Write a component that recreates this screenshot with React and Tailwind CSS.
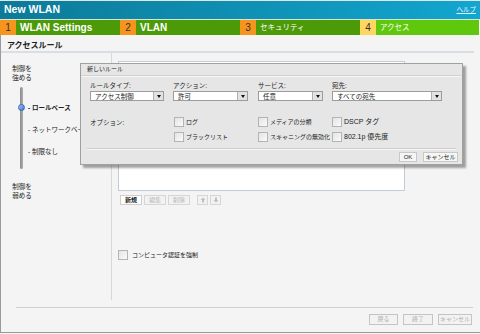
import React from "react";

const jp = { fontFamily: '"Liberation Sans", "Noto Sans CJK JP", sans-serif' };

const steps = [
  { n: "1", label: "WLAN Settings", bold: true, num: "bg-[#f7941d]", bar: "bg-[#4c9a08]", w: "w-[104px]" },
  { n: "2", label: "VLAN", bold: true, num: "bg-[#f7941d]", bar: "bg-[#4c9a08]", w: "w-[104px]" },
  { n: "3", label: "セキュリティ", bold: false, num: "bg-[#f7941d]", bar: "bg-[#4c9a08]", w: "w-[104px]" },
  { n: "4", label: "アクセス", bold: false, num: "bg-[#ffd760]", bar: "bg-[#60c80c]", w: "w-[103px]" },
];

function Check() {
  return <span className="inline-block h-[10px] w-[10px] shrink-0 border border-[#b4b4b4] bg-gradient-to-br from-[#e4e4e4] to-[#fafafa]" />;
}

function Select({ value, w }) {
  return (
    <div className={`flex h-[10px] ${w} border border-[#9c9c9c] bg-white`}>
      <span className="flex-1 pl-[4px] text-[6.5px] leading-[9px] text-[#222]">{value}</span>
      <span className="flex w-[10px] items-center justify-center border-l border-[#b0b0b0] bg-[#e2e2e2]">
        <span className="h-0 w-0 border-l-[2.5px] border-r-[2.5px] border-t-[3px] border-l-transparent border-r-transparent border-t-[#111]" />
      </span>
    </div>
  );
}

function Opt({ label, latin }) {
  return (
    <div className="flex items-center gap-[2px] whitespace-nowrap">
      <Check />
      <span className={latin ? "text-[7px] leading-[10px] text-[#222]" : "text-[6px] leading-[10px] text-[#222]"}>{label}</span>
    </div>
  );
}

function SmallBtn({ children, w, on }) {
  return (
    <span
      className={`flex h-[10px] ${w} items-center justify-center border text-[6px] leading-[8px] ${
        on ? "border-[#cfcfcf] bg-white font-bold text-[#222]" : "border-[#d6d6d6] bg-[#f2f2f2] text-[#b8b8b8]"
      }`}
    >
      {children}
    </span>
  );
}

export default function App() {
  return (
    <div className="relative h-[334px] w-[480px] overflow-hidden bg-[#f4f4f4] text-[#222]" style={jp}>
      <div className="h-px bg-[#e2e6e8]" />
      <header className="flex h-[18px] items-center justify-between bg-gradient-to-r from-[#0c7a98] to-[#12a6d0] pl-[4px] pr-[4px]">
        <span className="text-[10.5px] font-bold text-white">New WLAN</span>
        <span className="text-[6.5px] text-[#e6f6ff] underline">ヘルプ</span>
      </header>
      <div className="h-px bg-[#d8e8d0]" />
      <nav className="flex h-[15px]">
        {steps.map((s) => (
          <div key={s.n} className="flex">
            <span className={`flex w-[16px] items-center justify-center text-[10px] text-[#333] ${s.num}`}>{s.n}</span>
            <span
              className={`flex items-center pl-[4px] text-white ${s.w} ${s.bar} ${
                s.bold ? "text-[10px] font-bold" : "text-[7.5px]"
              }`}
            >
              {s.label}
            </span>
          </div>
        ))}
      </nav>

      <div className="flex h-[298px] flex-col border-b border-l border-[#9a9a9a]">
        <div className="h-[16px] pl-[6px] pt-[6px] text-[8px] font-bold leading-[10px]">アクセスルール</div>
        <div className="mr-[6px] h-[2px] bg-[#d8dee4]" />

        <div className="flex h-[247px]">
          <aside className="w-[111px] border-r border-[#d8d8d8] pt-[11px]">
            <div className="ml-[9px] w-[24px] text-center text-[6.5px] leading-[9px]">
              制御を<br />強める
            </div>
            <div className="mt-[5px] flex">
              <div className="relative ml-[19px] h-[82px] w-[3px] rounded-sm bg-gradient-to-r from-[#8a8a8a] to-[#b0b0b0]">
                <span className="absolute left-[-2px] top-[17px] h-[7px] w-[7px] rounded-full border border-[#3a64b8] bg-gradient-to-br from-[#a8c8ff] to-[#3f70d0]" />
              </div>
              <div className="ml-[5px] flex flex-col gap-[13px] whitespace-nowrap pt-[16px] text-[6.5px] leading-[9px]">
                <span className="font-bold">- ロールベース</span>
                <span>- ネットワークベース</span>
                <span>- 制限なし</span>
              </div>
            </div>
            <div className="ml-[9px] mt-[13px] w-[24px] text-center text-[6.5px] leading-[9px]">
              制御を<br />弱める
            </div>
          </aside>

          <main className="pl-[6px] pt-[8px]">
            <div className="h-[130px] w-[287px] border border-[#c2ccd6] bg-white" />
            <div className="ml-[2px] mt-[4px] flex gap-[2px]">
              <SmallBtn w="w-[22px]" on>新規</SmallBtn>
              <SmallBtn w="w-[22px]">編集</SmallBtn>
              <SmallBtn w="w-[22px]">削除</SmallBtn>
              <span className="w-[3px]" />
              <SmallBtn w="w-[11px]">
                <svg width="6" height="6" viewBox="0 0 6 6"><path d="M3 0.5 L5.5 3 H4 V5.5 H2 V3 H0.5 Z" fill="#c0c0c0" /></svg>
              </SmallBtn>
              <SmallBtn w="w-[11px]">
                <svg width="6" height="6" viewBox="0 0 6 6"><path d="M3 5.5 L5.5 3 H4 V0.5 H2 V3 H0.5 Z" fill="#c0c0c0" /></svg>
              </SmallBtn>
            </div>
            <div className="mt-[45px] flex items-center gap-[4px]">
              <Check />
              <span className="text-[6px] leading-[10px]">コンピュータ認証を強制</span>
            </div>
          </main>
        </div>

        <div className="ml-[15px] mr-[7px] mt-[7px] h-px bg-[#d0d0d0]" />
        <div className="mr-[8px] mt-[6px] flex justify-end gap-[5px]">
          {[["戻る", "w-[29px]"], ["終了", "w-[30px]"], ["キャンセル", "w-[34px]"]].map(([t, w]) => (
            <span key={t} className={`flex h-[11px] ${w} items-center justify-center whitespace-nowrap border border-[#c4c4c4] bg-[#f2f2f2] text-[6px] text-[#b0b0b0]`}>
              {t}
            </span>
          ))}
        </div>
      </div>

      {/* modal dialog */}
      <div className="absolute left-[80px] top-[63px] h-[102px] w-[383px] border border-[#a0a0a0] bg-[#e6e6e6] shadow-[3px_3px_2px_rgba(0,0,0,0.35)]">
        <div className="flex h-[12px] items-center border-b border-[#d2d2d2] pl-[6px] text-[6px]">新しいルール</div>
        <div className="mx-[1px] h-px bg-[#f6f6f6]" />
        <div className="grid grid-cols-[83px_85px_74px_110px] pl-[9px] pt-[3px]">
          <span className="h-[11px] text-[6.5px] leading-[11px]">ルールタイプ:</span>
          <span className="h-[11px] text-[6.5px] leading-[11px]">アクション:</span>
          <span className="h-[11px] text-[6.5px] leading-[11px]">サービス:</span>
          <span className="h-[11px] text-[6.5px] leading-[11px]">宛先:</span>
          <Select value="アクセス制御" w="w-[74px]" />
          <Select value="許可" w="w-[75px]" />
          <Select value="任意" w="w-[65px]" />
          <Select value="すべての宛先" w="w-[110px]" />
          <div className="row-span-2 pt-[17px] text-[6.5px] leading-[9px]">オプション:</div>
          <div className="mt-[16px] pl-[1px]"><Opt label="ログ" /></div>
          <div className="mt-[16px]"><Opt label="メディアの分類" /></div>
          <div className="mt-[16px]"><Opt label="DSCP タグ" latin /></div>
          <div className="mt-[5px] pl-[1px]"><Opt label="ブラックリスト" /></div>
          <div className="mt-[5px]"><Opt label="スキャニングの無効化" /></div>
          <div className="mt-[5px]"><Opt label="802.1p 優先度" latin /></div>
        </div>
        <div className="mx-[6px] mt-[6px] h-px bg-[#cdcdcd]" />
        <div className="mx-[6px] h-px bg-[#f6f6f6]" />
        <div className="mr-[4px] mt-[2px] flex justify-end gap-[6px]">
          <span className="flex h-[10px] w-[18px] items-center justify-center border border-[#c8c8c8] bg-[#f6f6f6] text-[6px]">OK</span>
          <span className="flex h-[10px] w-[35px] items-center justify-center whitespace-nowrap border border-[#c8c8c8] bg-[#f6f6f6] text-[6px]">キャンセル</span>
        </div>
      </div>
    </div>
  );
}
